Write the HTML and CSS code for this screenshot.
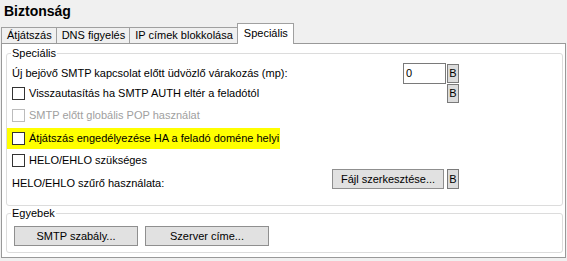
FILE: index.html
```html
<!DOCTYPE html>
<html lang="hu">
<head>
<meta charset="utf-8">
<title>Biztonság</title>
<link rel="stylesheet" href="styles.css">
</head>
<body>
<div class="title">Biztonság</div>
<div class="tabs">
  <div class="tab">Átjátszás</div>
  <div class="tab">DNS figyelés</div>
  <div class="tab">IP címek blokkolása</div>
  <div class="tab active">Speciális</div>
</div>
<div class="panel">
  <fieldset class="group group-main">
    <legend>Speciális</legend>
    <div class="row row1">
      <span class="label">Új bejövő SMTP kapcsolat előtt üdvözlő várakozás (mp):</span>
      <div class="controls gap1">
        <input class="num" type="text" value="0">
        <button class="bbtn">B</button>
      </div>
    </div>
    <div class="row row2">
      <span class="check"></span>
      <span class="label">Visszautasítás ha SMTP AUTH eltér a feladótól</span>
      <div class="controls">
        <button class="bbtn">B</button>
      </div>
    </div>
    <div class="row row3 disabled">
      <span class="check"></span>
      <span class="label">SMTP előtt globális POP használat</span>
    </div>
    <div class="row row4 highlight">
      <span class="check"></span>
      <span class="label">Átjátszás engedélyezése HA a feladó doméne helyi</span>
    </div>
    <div class="row row5">
      <span class="check"></span>
      <span class="label">HELO/EHLO szükséges</span>
    </div>
    <div class="row row6">
      <span class="label low">HELO/EHLO szűrő használata:</span>
      <div class="controls gap3">
        <button class="btn btn-file">Fájl szerkesztése...</button>
        <button class="bbtn">B</button>
      </div>
    </div>
  </fieldset>
  <fieldset class="group group-other">
    <legend>Egyebek</legend>
    <div class="btnrow">
      <button class="btn btn-wide">SMTP szabály...</button>
      <button class="btn btn-wide">Szerver címe...</button>
    </div>
  </fieldset>
</div>
</body>
</html>
```
FILE: styles.css
```css
html, body {
  margin: 0;
  padding: 0;
  background: #f0f0f0;
  font-family: "Liberation Sans", Arial, sans-serif;
  font-size: 11px;
  color: #000;
}

.title {
  font-weight: bold;
  font-size: 14px;
  line-height: 16px;
  padding: 3px 0 0 4px;
}

.tabs {
  display: flex;
  align-items: flex-end;
  height: 20px;
  margin-top: 4px;
  padding-left: 1px;
}

.tab {
  box-sizing: border-box;
  height: 16px;
  line-height: 14px;
  padding: 0 4px 0 5px;
  border: 1px solid #a0a0a0;
  border-bottom: none;
  margin-right: -1px;
  background: #f0f0f0;
  white-space: nowrap;
}

.tab.active {
  height: 21px;
  margin-bottom: -1px;
  padding: 2px 5px 0 6px;
  background: #fff;
  position: relative;
  z-index: 1;
}

.panel {
  box-sizing: border-box;
  width: 565px;
  margin-left: 1px;
  border: 1px solid #999;
  background: #fff;
  padding: 0 2px 0 4px;
}

.group {
  margin: 3px 0 0 0;
  border: 1px solid #dcdcdc;
  border-radius: 3px;
  min-width: 0;
}

.group legend {
  font-size: 11px;
  line-height: 13px;
  padding: 0 1px;
  margin-left: -1px;
}

.group-main {
  padding: 2px 103px 16px 5px;
}

.group-other {
  margin-top: 1px;
  margin-bottom: 4px;
  padding: 6px 5px 6px 5px;
}

.row {
  display: flex;
  align-items: center;
  white-space: nowrap;
}

.row1 { height: 22px; }
.row2 { height: 19px; }
.row3 { height: 24px; }
.row4 { height: 21px; margin-top: 1px; }
.row5 { height: 22px; }
.row6 { height: 20px; margin-top: -2px; align-items: flex-end; }

.label {
  line-height: 13px;
}

.label.low {
  margin-bottom: -1px;
}

.controls {
  margin-left: auto;
  display: flex;
  align-items: center;
}

.gap1 { gap: 1px; }
.gap3 { gap: 3px; }

.check {
  box-sizing: border-box;
  width: 13px;
  height: 13px;
  border: 1px solid #333;
  background: #fff;
  margin-right: 4px;
  flex: none;
}

.disabled .label { color: #a0a0a0; }
.disabled .check { border-color: #bcbcbc; }

.highlight {
  background: #ffff00;
  width: fit-content;
  margin-left: -5px;
  padding: 0 1px 0 5px;
}

.num {
  box-sizing: border-box;
  width: 43px;
  height: 21px;
  border: 1px solid #7a7a7a;
  padding: 0 2px;
  margin: 0;
  font-family: inherit;
  font-size: 11px;
  color: #000;
  background: #fff;
  outline: none;
}

.bbtn {
  box-sizing: border-box;
  width: 12px;
  height: 19px;
  padding: 0;
  margin: 0;
  border: 1px solid #7a7a7a;
  background: #dcdcdc;
  font-family: inherit;
  font-size: 11px;
  line-height: 17px;
  color: #000;
  text-align: center;
}

.row6 .bbtn { height: 20px; }

.btn {
  box-sizing: border-box;
  height: 20px;
  padding: 0;
  margin: 0;
  border: 1px solid #8f8f8f;
  background: #e1e1e1;
  font-family: inherit;
  font-size: 11px;
  color: #000;
  text-align: center;
}

.btn-file { width: 112px; }

.btnrow {
  display: flex;
  gap: 7px;
  margin-left: 2px;
}

.btn-wide { width: 124px; }
```
